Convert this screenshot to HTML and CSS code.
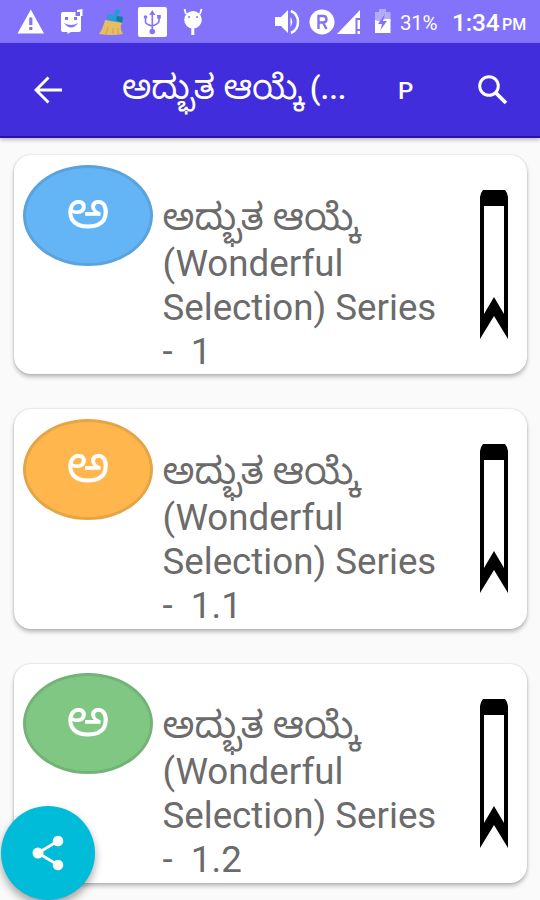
FILE: index.html
```
<!DOCTYPE html>
<html lang="kn">
<head>
<meta charset="utf-8">
<title>ಅದ್ಭುತ ಆಯ್ಕೆ</title>
<link rel="stylesheet" href="styles.css">
</head>
<body>
<svg width="0" height="0" class="defs">
  <symbol id="bookmark" viewBox="0 0 28 150">
    <path fill-rule="evenodd" d="M3 0H25Q27 2 28 7V149L14 126L0 149V7Q1 2 3 0ZM4 16V124L14 107L24 124V16Z"/>
  </symbol>
</svg>
<div class="screen">
  <header class="status">
    <svg class="status-left" width="210" height="43" viewBox="0 0 210 43" fill="#fff">
      <path fill-rule="evenodd" d="M30.800 9.500L44 33.500H17.500ZM29.200 17.500V25H32.400V17.500ZM29.200 27V30H32.400V27Z"/>
      <path fill-rule="evenodd" d="M63 12H75.500V16H81V30Q81 32 79 32H71L67.500 34V32H63Q61 32 61 30V14Q61 12 63 12ZM65 17V20H68V17ZM74 17V20H77V17ZM64 23Q71 32 78 23Q71 27 64 23Z"/>
      <path d="M77 10L82.500 9V16H80V12H77Z"/>
      <path fill="#18a3d2" d="M115 10L119 9L120 12L117 16L123 17L122 23L107 19L108 14L114 16Z"/>
      <path fill="#147b9f" d="M117 16L123 17L122 23L116 20Z"/>
      <path fill="#e7bd62" d="M105 20L122 23Q119 28 123 34Q111 36 99 34Q103 29 105 20Z"/>
      <path stroke="#cfa14c" fill="none" d="M108 27L106 34M113 28V34M118 28V34"/>
      <rect x="138" y="7" width="29" height="30" rx="2"/>
      <g stroke="#8273fa" stroke-width="1.600" fill="none"><path d="M152.300 13V32M145.500 18V22Q145.500 24 152 26M159 17V21Q159 24 152 26"/></g>
      <path fill="#8273fa" d="M149.300 15L152.300 10L155.300 15Z"/>
      <circle cx="152.300" cy="31.500" r="2.800" fill="#8273fa"/><circle cx="145.500" cy="17" r="1.800" fill="#8273fa"/><path fill="#8273fa" d="M157.200 15H160.800V18.600H157.200Z"/>
      <circle cx="193" cy="19.800" r="8.800"/>
      <path d="M186 14L184.500 9M200 14L201.500 9" stroke="#fff" stroke-width="1.800"/>
      <path d="M191.300 27H194.300V35H191.300Z"/>
      <g fill="#8273fa"><circle cx="189" cy="17" r="1"/><circle cx="197" cy="17" r="1"/></g>
    </svg>
    <svg class="status-right" width="120" height="43" viewBox="0 0 120 43" fill="#fff">
      <path d="M4 17H10L17 10V33L10 26H4Z"/>
      <path d="M19.500 17Q23 21.500 19.500 27Z"/>
      <path d="M20 11Q27 14 27 22Q27 30 20 33" fill="none" stroke="#fff" stroke-width="2.500"/>
      <circle cx="51" cy="22" r="12.500"/>
      <path fill="none" stroke="#8273fa" stroke-width="2.400" d="M47.500 29V16H52Q55.500 16 55.500 19.200Q55.500 22.500 52 22.500H48M52 22.500L55.500 29"/>
      <path d="M89 10V18H84.500V34H66Z"/><path d="M86.500 20H89V29H86.500ZM86.500 31H89V34H86.500Z"/>
      <path opacity=".4" d="M104 12H108V9H115V12H119.500V22H104Z"/>
      <path d="M104 20L110 22L112 19H119.500V33H104Z"/>
      <path fill="#8273fa" d="M114 14L107 24H111L109.500 30L116 21H112Z"/>
    </svg>
    <span class="battery">31%</span>
    <span class="clock">1:34</span><span class="pm">PM</span>
  </header>
  <nav class="appbar">
    <svg class="back" width="28" height="28" viewBox="0 0 28 28" fill="none" stroke="#fff" stroke-width="2.900"><path d="M28 14H2.500M14.500 1.500L2 14L14.500 26.500"/></svg>
    <h1 class="title">ಅದ್ಭುತ ಆಯ್ಕೆ <span class="latin">(...</span></h1>
    <span class="page">P</span>
    <svg class="search" width="30" height="30" viewBox="0 0 30 30" fill="none" stroke="#fff"><circle cx="11" cy="11" r="9.300" stroke-width="3"/><path stroke-width="3.800" d="M18 18L28 28"/></svg>
  </nav>
  <main class="list">
    <article class="card">
      <div class="avatar blue">ಅ</div>
      <p class="text"><span class="kn">ಅದ್ಭುತ ಆಯ್ಕೆ</span><span>(Wonderful</span><span>Selection) Series</span><span>-&nbsp; 1</span></p>
      <svg class="mark" width="28" height="150"><use href="#bookmark"/></svg>
    </article>
    <article class="card">
      <div class="avatar orange">ಅ</div>
      <p class="text"><span class="kn">ಅದ್ಭುತ ಆಯ್ಕೆ</span><span>(Wonderful</span><span>Selection) Series</span><span>-&nbsp; 1.1</span></p>
      <svg class="mark" width="28" height="150"><use href="#bookmark"/></svg>
    </article>
    <article class="card">
      <div class="avatar green">ಅ</div>
      <p class="text"><span class="kn">ಅದ್ಭುತ ಆಯ್ಕೆ</span><span>(Wonderful</span><span>Selection) Series</span><span>-&nbsp; 1.2</span></p>
      <svg class="mark" width="28" height="150"><use href="#bookmark"/></svg>
    </article>
  </main>
  <button class="share" aria-label="Share">
    <svg width="32" height="36" viewBox="0 0 32 36" fill="#fff"><path d="M26 6L6 18L26 30" fill="none" stroke="#fff" stroke-width="2.800"/><circle cx="26" cy="6" r="5.300"/><circle cx="6" cy="18" r="5.500"/><circle cx="26" cy="30" r="5.300"/></svg>
  </button>
</div>
</body>
</html>
```
FILE: styles.css
```
* { box-sizing: border-box; }
body { margin: 0; font-family: Roboto, "Noto Sans Kannada", "Noto Sans", sans-serif; background: #fafafa; }
.defs { position: absolute; }
.screen { position: relative; width: 540px; height: 900px; overflow: hidden; }
.status { height: 43px; background: #8273fa; display: flex; align-items: center; color: #fff; }
.status svg { flex: none; }
.status-right { margin-left: 61px; }
.battery { width: 44px; margin: 2px 0 0 9px; font-size: 20.5px; letter-spacing: -.3px; }
.clock { width: 48px; margin: 2px 0 0 8px; font-size: 24.5px; font-weight: 500; letter-spacing: -.2px; }
.pm { margin: 6px 0 0 2px; font-size: 16px; font-weight: 500; }
.appbar { height: 95px; background: #412ddb; border-bottom: 2px solid #2810b4; box-shadow: 0 2px 4px rgba(0,0,0,.25); display: flex; align-items: center; color: #fff; position: relative; }
.back { margin: 1px 0 0 34px; flex: none; }
.title { width: 236px; margin: 0 0 4px 60px; font-size: 34px; line-height: 50px; font-weight: 400; white-space: nowrap; }
.latin { font-size: 31px; font-weight: 500; margin-left: -2px; }
.page { width: 60px; margin: 3px 0 0 40px; font-size: 24px; font-weight: 500; }
.search { margin: 1px 0 0 20px; flex: none; }
.list { padding: 17px 13.500px 0; display: flex; flex-direction: column; gap: 35px; }
.card { flex: none; height: 219.300px; background: #fff; border-radius: 17px; box-shadow: 0 3px 4px rgba(0,0,0,.25), 0 0 2px rgba(0,0,0,.18); display: flex; align-items: flex-start; }
.avatar { flex: none; width: 130px; height: 101px; margin: 9.500px 0 0 9.500px; border-radius: 50%; border: 3px solid; color: #fff; font-size: 50px; line-height: 86px; font-weight: 400; text-align: center; }
.blue { background: #64b5f6; border-color: #5aa3de; }
.orange { background: #ffb74d; border-color: #e6a545; }
.green { background: #81c784; border-color: #74b377; }
.text { width: 308px; margin: 42.500px 0 0 9.500px; color: #6b6b6b; font-size: 36.7px; line-height: 44px; white-space: nowrap; }
.text span { display: block; }
.text .kn { height: 44px; font-size: 37px; line-height: 39px; }
.mark { flex: none; margin: 35px 0 0 9px; }
.share { position: absolute; left: 1px; top: 806px; width: 94px; height: 94px; border: 0; padding: 0; border-radius: 50%; background: #00bcd9; box-shadow: 0 5px 9px rgba(0,0,0,.35); display: flex; align-items: center; justify-content: center; }
```
